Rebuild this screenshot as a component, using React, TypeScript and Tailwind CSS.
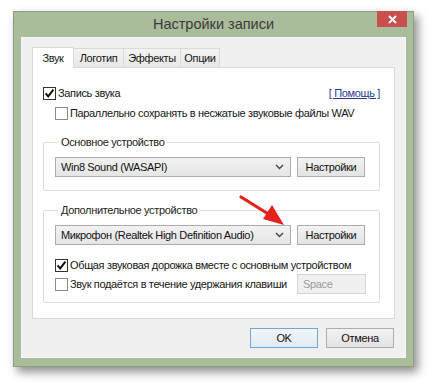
import React from 'react';

const Checkbox: React.FC<{ checked?: boolean }> = ({ checked }) => (
  <span className={`w-[13px] h-[13px] border bg-white flex items-center justify-center shrink-0 ${checked ? 'border-[#333333]' : 'border-[#8a8a8a]'}`}>
    {checked && (
      <svg width="11" height="11" viewBox="0 0 11 11">
        <path d="M1.6 5.4 L4.2 8.4 L9.4 1.6" fill="none" stroke="#111" strokeWidth="2" />
      </svg>
    )}
  </span>
);

const Combo: React.FC<{ text: string }> = ({ text }) => (
  <div className="w-[236px] h-[20px] border border-[#acacac] bg-linear-to-b from-[#f2f2f2] to-[#e5e5e5] flex items-center pl-[5px] pr-[6px]">
    <span className="flex-1 text-[#111]">{text}</span>
    <svg width="9" height="6" viewBox="0 0 9 6">
      <path d="M1 1 L4.5 4.5 L8 1" fill="none" stroke="#444" strokeWidth="1.4" />
    </svg>
  </div>
);

const Btn: React.FC<{ text: string; focused?: boolean }> = ({ text, focused }) => (
  <div className={`w-[68px] h-[20px] border flex items-center justify-center text-[#111] ${focused ? 'border-[#6fa7dc] bg-linear-to-b from-[#f1f6fa] to-[#e2ebf2]' : 'border-[#acacac] bg-linear-to-b from-[#f2f2f2] to-[#e3e3e3]'}`}>
    {text}
  </div>
);

const Tab: React.FC<{ text: string; active?: boolean; w: string }> = ({ text, active, w }) =>
  active ? (
    <div className={`${w} h-[21px] bg-white border border-b-0 border-[#d9d9d9] flex items-center justify-center -mb-px z-10`}>{text}</div>
  ) : (
    <div className={`${w} h-[19px] bg-linear-to-b from-[#f3f3f3] to-[#e8e8e8] border border-l-0 border-b-0 border-[#d9d9d9] flex items-center justify-center`}>{text}</div>
  );

export default function App() {
  return (
    <div className="relative w-[434px] h-[386px] bg-white overflow-hidden font-['Liberation_Sans',Arial,sans-serif] text-[11px] tracking-[-0.35px] whitespace-nowrap text-[#161616]">
      <div className="ml-[13px] mt-[11px] w-[401px] h-[356px] bg-[#aabd9b] border border-[#8f9d84] shadow-[4px_5px_9px_rgba(0,0,0,0.45)] flex flex-col">
        {/* title bar */}
        <div className="h-[25px] relative flex items-center justify-center shrink-0">
          <span className="text-[14.5px] tracking-normal text-[#3a3a3a] mt-[1px]">Настройки записи</span>
          <div className="absolute right-[6px] top-[-1px] w-[30px] h-[16px] bg-[#c9504f] flex items-center justify-center">
            <svg width="9" height="9" viewBox="0 0 9 9">
              <path d="M1 1 L8 8 M8 1 L1 8" stroke="#fff" strokeWidth="1.8" />
            </svg>
          </div>
        </div>

        {/* client area */}
        <div className="mx-[7px] mb-[8px] flex-1 bg-[#f0f0f0] border border-[#f7f7f7] flex flex-col pl-[10px] pr-[10px]">
          <div className="mt-[9px] flex items-end">
            <Tab text="Звук" active w="w-[42px]" />
            <Tab text="Логотип" w="w-[50px]" />
            <Tab text="Эффекты" w="w-[57px]" />
            <Tab text="Опции" w="w-[39px]" />
          </div>

          <div className="w-[363px] h-[252px] bg-white border border-[#d9d9d9] flex flex-col pl-[10px] pr-[14px]">
            <div className="mt-[18px] h-[15px] flex items-center justify-between">
              <div className="flex items-center gap-[2px]">
                <Checkbox checked />
                <span>Запись звука</span>
              </div>
              <span className="text-[#2a3a8c] underline">[ Помощь ]</span>
            </div>
            <div className="mt-[5px] h-[15px] ml-[12px] flex items-center gap-[2px]">
              <Checkbox />
              <span>Параллельно сохранять в несжатые звуковые файлы WAV</span>
            </div>

            <fieldset className="mt-[14px] w-[337px] border border-[#dcdcdc] rounded-[2px] pl-[11px] pt-[7px] pb-[13px]">
              <legend className="ml-[3px] px-[3px] leading-[15px] text-[#222]">Основное устройство</legend>
              <div className="flex gap-[6px]">
                <Combo text="Win8 Sound (WASAPI)" />
                <Btn text="Настройки" />
              </div>
            </fieldset>

            <fieldset className="mt-[12px] w-[337px] border border-[#dcdcdc] rounded-[2px] pl-[11px] pt-[7px] pb-[8px]">
              <legend className="ml-[3px] px-[3px] leading-[15px] text-[#222]">Дополнительное устройство</legend>
              <div className="flex gap-[6px]">
                <Combo text="Микрофон (Realtek High Definition Audio)" />
                <Btn text="Настройки" />
              </div>
              <div className="mt-[13px] h-[15px] flex items-center gap-[2px]">
                <Checkbox checked />
                <span>Общая звуковая дорожка вместе с основным устройством</span>
              </div>
              <div className="mt-[1px] h-[20px] flex items-center">
                <Checkbox />
                <span className="ml-[2px] flex-1">Звук подаётся в течение удержания клавиши</span>
                <div className="w-[69px] h-[20px] mr-[13px] border border-[#d5d5d5] bg-[#f0f0f0] flex items-center pl-[5px] text-[#9a9a9a]">Space</div>
              </div>
            </fieldset>
          </div>

          <div className="mt-[9px] flex justify-end gap-[8px] pr-[1px]">
            <Btn text="OK" focused />
            <Btn text="Отмена" />
          </div>
        </div>
      </div>

      {/* red arrow annotation */}
      <svg className="absolute left-0 top-0 pointer-events-none" width="434" height="386" viewBox="0 0 434 386">
        <line x1="241" y1="197" x2="270" y2="215" stroke="#e3221b" strokeWidth="3.2" strokeLinecap="round" />
        <path d="M284 225 L263 219 L272 205 Z" fill="#e3221b" />
      </svg>
    </div>
  );
}
